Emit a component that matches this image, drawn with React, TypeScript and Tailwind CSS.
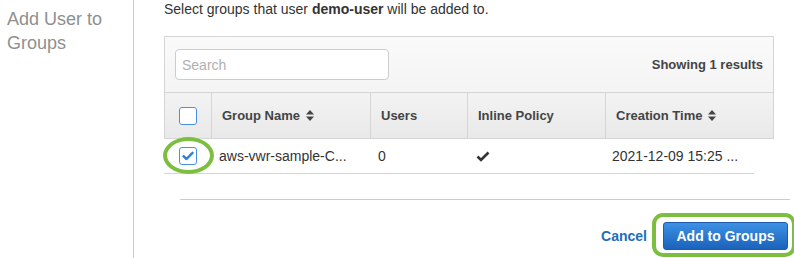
import { useState } from 'react';

function SortIcon() {
  return (
    <svg width="8" height="11" viewBox="0 0 8 11" className="inline-block ml-[6px]">
      <path d="M4 0 L8 4.5 L0 4.5 Z" fill="#444" />
      <path d="M4 11 L8 6.5 L0 6.5 Z" fill="#444" />
    </svg>
  );
}

function Checkbox({ checked, onChange }: { checked: boolean; onChange: () => void }) {
  return (
    <button
      type="button"
      onClick={onChange}
      className="w-[18px] h-[18px] rounded-[3px] border border-[#4a90e2] bg-white flex items-center justify-center"
    >
      {checked && (
        <svg width="12" height="10" viewBox="0 0 12 10">
          <path d="M1.5 5.2 L4.5 8 L10.5 1.8" stroke="#2f7fd8" strokeWidth="2.4" fill="none" strokeLinecap="round" strokeLinejoin="round" />
        </svg>
      )}
    </button>
  );
}

export default function App() {
  const [allChecked, setAllChecked] = useState(false);
  const [rowChecked, setRowChecked] = useState(true);

  return (
    <div className="flex w-[794px] h-[258px] bg-white font-['Liberation_Sans',Arial,sans-serif] overflow-hidden">
      <div className="w-[134px] shrink-0 border-r border-[#cccccc] pl-[7px] pt-[7px]">
        <div className="text-[18px] leading-[24px] text-[#8f8f8f]">Add User to Groups</div>
      </div>

      <div className="relative flex-1 pl-[30px] flex flex-col">
        <p className="text-[14px] leading-[18px] text-[#333]">
          Select groups that user <span className="font-bold">demo-user</span> will be added to.
        </p>

        <div className="mt-[18px] w-[610px]">
          <div className="border border-[#d5d5d5] bg-gradient-to-b from-[#fafafa] to-[#efefef]">
            <div className="h-[55px] flex items-center justify-between pl-[10px] pr-[10px]">
              <input
                placeholder="Search"
                className="w-[214px] h-[31px] rounded-[4px] border border-[#cccccc] bg-white px-[6px] text-[14px] text-[#333] placeholder:text-[#b0b0b0] outline-none"
              />
              <span className="text-[13px] font-bold text-[#444]">Showing 1 results</span>
            </div>
            <div className="flex h-[46px] border-t border-[#d5d5d5] bg-gradient-to-b from-[#f3f3f3] to-[#e9e9e9] text-[13px] font-bold text-[#444]">
              <div className="w-[47px] border-r border-[#d5d5d5] flex items-center pl-[14px]">
                <Checkbox checked={allChecked} onChange={() => setAllChecked(!allChecked)} />
              </div>
              <div className="w-[159px] border-r border-[#d5d5d5] flex items-center pl-[10px]">
                Group Name <SortIcon />
              </div>
              <div className="w-[97px] border-r border-[#d5d5d5] flex items-center pl-[10px]">Users</div>
              <div className="w-[138px] border-r border-[#d5d5d5] flex items-center pl-[10px]">Inline Policy</div>
              <div className="flex-1 flex items-center pl-[10px]">
                Creation Time <SortIcon />
              </div>
            </div>
          </div>
          <div className="flex h-[35px] w-[590px] border-b border-[#d5d5d5] text-[14px] text-[#333] items-center">
            <div className="w-[47px] pl-[15px] flex items-center">
              <Checkbox checked={rowChecked} onChange={() => setRowChecked(!rowChecked)} />
            </div>
            <div className="w-[159px] pl-[8px]">aws-vwr-sample-C...</div>
            <div className="w-[97px] pl-[8px]">0</div>
            <div className="w-[138px] pl-[9px] flex items-center">
              <svg width="14" height="11" viewBox="0 0 14 11">
                <path d="M1.5 5.5 L5 9 L12.5 1.5" stroke="#333" strokeWidth="2.6" fill="none" />
              </svg>
            </div>
            <div className="flex-1 pl-[7px]">2021-12-09 15:25 ...</div>
          </div>
        </div>

        <div className="mt-[25px] ml-[16px] mr-[4px] border-t border-[#cccccc]" />

        <div className="mt-[22px] flex items-center justify-end pr-[6px] gap-[16px]">
          <a href="#" className="text-[14px] font-bold text-[#1f6dbb]">Cancel</a>
          <button
            type="button"
            className="w-[125px] h-[28px] rounded-[3px] border border-[#1c5ca8] bg-gradient-to-b from-[#3d91e4] to-[#1b62bb] text-white text-[14px] font-bold"
          >
            Add to Groups
          </button>
        </div>

        {/* annotation highlights */}
        <div className="absolute left-[29px] top-[137px] w-[51px] h-[37px] rounded-[50%] border-[4px] border-[#7cbf3f] pointer-events-none" />
        <div className="absolute left-[518px] top-[213px] w-[144px] h-[44px] rounded-[11px] border-[4px] border-[#7cbf3f] pointer-events-none" />
      </div>
    </div>
  );
}
